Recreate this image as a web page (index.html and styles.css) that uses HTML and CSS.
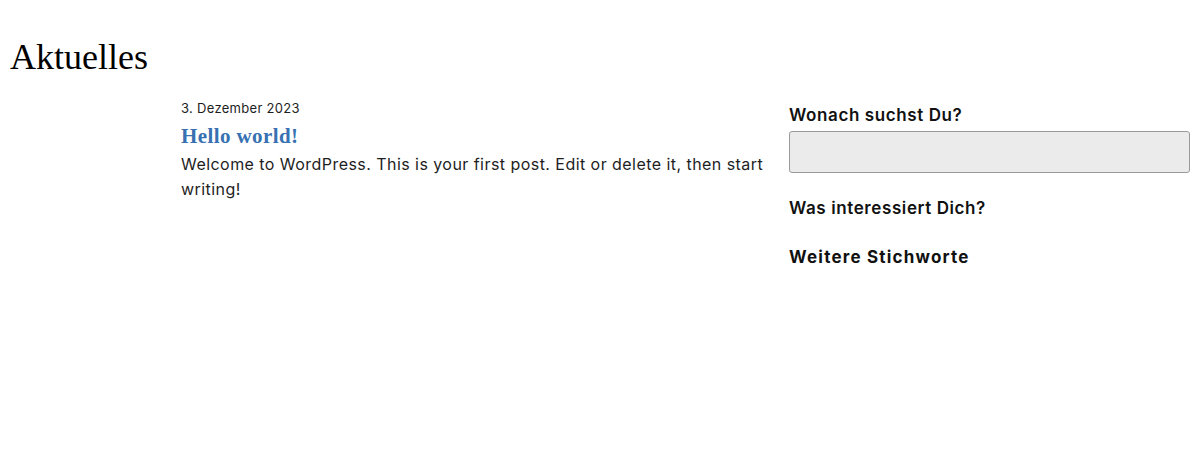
FILE: index.html
```html
<!DOCTYPE html>
<html lang="de">
<head>
<meta charset="utf-8">
<title>Aktuelles</title>
<link rel="stylesheet" href="styles.css">
</head>
<body>
<h1 class="page-title">Aktuelles</h1>
<div class="layout">
  <main class="posts">
    <article class="post">
      <div class="post-date">3. Dezember 2023</div>
      <h2 class="post-title"><a href="#">Hello world!</a></h2>
      <p class="post-excerpt">Welcome to WordPress. This is your first post. Edit or delete it, then start writing!</p>
    </article>
  </main>
  <aside class="sidebar">
    <h3 class="widget-title">Wonach suchst Du?</h3>
    <input class="search-field" type="search" aria-label="Suche">
    <h3 class="widget-title widget-gap">Was interessiert Dich?</h3>
    <h3 class="widget-title widget-title-wide widget-gap2">Weitere Stichworte</h3>
  </aside>
</div>
</body>
</html>
```

FILE: styles.css
```css
html, body {
  margin: 0;
  padding: 0;
  background: #fff;
}
body {
  padding: 0 10px;
  font-family: Inter, "Noto Sans", sans-serif;
  color: #1e1e1e;
}
.page-title {
  margin: 37px 0 0;
  font-family: "Liberation Serif", serif;
  font-weight: normal;
  font-size: 36px;
  line-height: 41px;
  color: #000;
}
.layout {
  display: flex;
  align-items: flex-start;
}
.posts {
  margin-left: 171px;
  flex: 0 0 590px;
  padding-top: 21px;
}
.post-date {
  font-size: 13px;
  line-height: 18px;
  letter-spacing: 0.3px;
}
.post-title {
  margin: 6px 0 0;
  font-family: "Liberation Serif", serif;
  font-weight: bold;
  font-size: 21px;
  line-height: 26px;
  letter-spacing: 0.4px;
}
.post-title a {
  color: #3871b2;
  text-decoration: none;
}
.post-excerpt {
  margin: 3px 0 0;
  font-size: 16px;
  line-height: 25px;
  letter-spacing: 0.45px;
}
.sidebar {
  flex: 1;
  margin-left: 18px;
  padding-top: 25px;
  display: flex;
  flex-direction: column;
}
.widget-title {
  margin: 0;
  font-size: 17px;
  line-height: 24px;
  font-weight: 600;
  letter-spacing: 0.6px;
  color: #111;
}
.widget-title-wide {
  font-weight: 700;
  letter-spacing: 1.2px;
}
.search-field {
  margin: 4px 0 0;
  box-sizing: border-box;
  height: 42px;
  width: 100%;
  background: #ebebeb;
  border: 1px solid #9a9a9a;
  border-radius: 3px;
}
.widget-gap {
  margin-top: 23px;
}
.widget-gap2 {
  margin-top: 25px;
}
```
